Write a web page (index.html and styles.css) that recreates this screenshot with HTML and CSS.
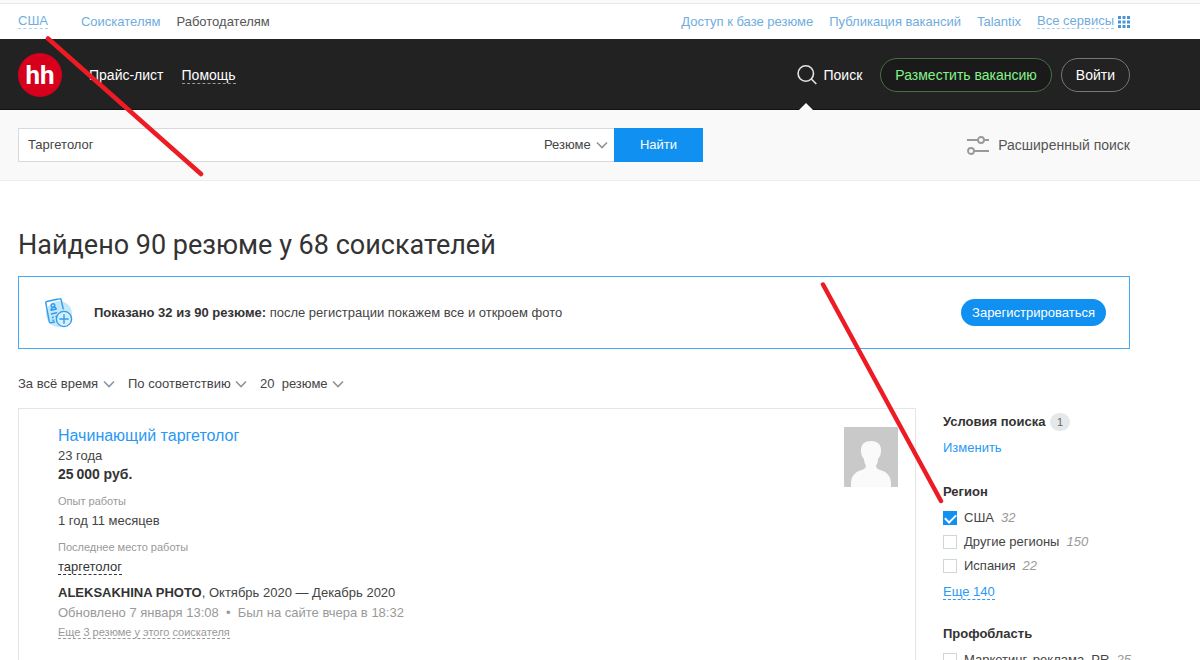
FILE: index.html
```html
<!DOCTYPE html>
<html lang="ru">
<head>
<meta charset="utf-8">
<meta name="viewport" content="width=device-width, initial-scale=1">
<title>Найдено 90 резюме у 68 соискателей</title>
<link rel="stylesheet" href="styles.css">
</head>
<body>
<nav class="topbar wrap">
  <a class="dashed region" href="#">США</a>
  <a href="#">Соискателям</a>
  <a class="current" href="#">Работодателям</a>
  <span class="spacer"></span>
  <a href="#">Доступ к базе резюме</a>
  <a href="#">Публикация вакансий</a>
  <a href="#">Talantix</a>
  <span class="services"><a class="dashed" href="#">Все сервисы</a>
    <svg width="12" height="12" viewBox="0 0 12 12" fill="#4a94d6"><path d="M0 0h3v3H0zM4.500 0h3v3h-3zM9 0h3v3H9zM0 4.500h3v3H0zM4.500 4.500h3v3h-3zM9 4.500h3v3H9zM0 9h3v3H0zM4.500 9h3v3h-3zM9 9h3v3H9z"/></svg>
  </span>
</nav>

<header class="header wrap">
  <a class="logo" href="#">hh</a>
  <a class="price" href="#">Прайс-лист</a>
  <a class="dashed" href="#">Помощь</a>
  <span class="spacer"></span>
  <a class="find" href="#">
    <svg width="20" height="20" viewBox="0 0 20 20" fill="none" stroke="#e4e4e4" stroke-width="1.600"><circle cx="8.800" cy="8.500" r="7.700"/><path d="M14.300 14l5 5"/></svg>
    Поиск
  </a>
  <button class="pill pill-green" type="button">Разместить вакансию</button>
  <button class="pill" type="button">Войти</button>
</header>

<form class="search wrap">
  <div class="field">
    <input class="query" type="text" value="Таргетолог" aria-label="Поиск резюме">
    <span class="pick"><select aria-label="Что искать"><option>Резюме</option></select>
      <svg class="chev" viewBox="0 0 12 8"><path d="M1 1.500l5 5 5-5"/></svg></span>
  </div>
  <button class="submit" type="button">Найти</button>
  <span class="spacer"></span>
  <a class="advanced" href="#">
    <svg width="22" height="20" viewBox="0 0 22 20" fill="none" stroke="#999" stroke-width="1.800"><path d="M0 5h11M17 5h5M7 16h15"/><circle cx="14" cy="5" r="3"/><circle cx="4" cy="16" r="3"/></svg>
    Расширенный поиск
  </a>
</form>

<main class="main wrap">
  <h1>Найдено 90 резюме у 68 соискателей</h1>

  <section class="banner">
    <svg width="30" height="30" viewBox="0 0 30 30" fill="none" stroke="#2f9bf0" stroke-width="1.400" stroke-linecap="round" stroke-linejoin="round">
      <circle cx="14" cy="16" r="13" fill="#c3e8f8" stroke="none"/>
      <path d="M9.500 24l-3.500.8a1.500 1.500 0 0 1-1.700-1.100L.8 5.200a1.400 1.400 0 0 1 1-1.700L14.500.8a1.400 1.400 0 0 1 1.700 1l2 9"/>
      <circle cx="8" cy="7.500" r="1.800"/><path d="M6 12.200c0-3 4.500-4 5.300-1.200zM6.500 16l5-1.200M7.500 19.500l.8-.2M11 18.500l1-.2M8 22.300l.8-.2"/>
      <circle cx="19" cy="21" r="7.600" fill="#d6f0fb"/><path d="M19 16.800v8.400M14.800 21h8.400"/>
    </svg>
    <p class="banner-text"><b>Показано 32 из 90 резюме:</b> после регистрации покажем все и откроем фото</p>
    <button class="register" type="button">Зарегистрироваться</button>
  </section>

  <div class="filters">
    <span class="pick"><select aria-label="Период"><option>За всё время</option></select><svg class="chev" viewBox="0 0 12 8"><path d="M1 1.500l5 5 5-5"/></svg></span>
    <span class="pick"><select aria-label="Сортировка"><option>По соответствию</option></select><svg class="chev" viewBox="0 0 12 8"><path d="M1 1.500l5 5 5-5"/></svg></span>
    <span class="pick"><select aria-label="На странице"><option>20&nbsp; резюме</option></select><svg class="chev" viewBox="0 0 12 8"><path d="M1 1.500l5 5 5-5"/></svg></span>
  </div>

  <div class="columns">
    <article class="card">
      <div class="info">
        <h2><a href="#">Начинающий таргетолог</a></h2>
        <p>23 года</p>
        <p class="salary">25&#8201;000 руб.</p>
        <p class="label">Опыт работы</p>
        <p>1 год 11 месяцев</p>
        <p class="label">Последнее место работы</p>
        <p><a class="dashed job" href="#">таргетолог</a></p>
        <p class="company"><b>ALEKSAKHINA PHOTO</b>, Октябрь 2020 — Декабрь 2020</p>
        <p class="muted">Обновлено 7 января 13:08 &nbsp;•&nbsp; Был на сайте вчера в 18:32</p>
        <p class="more"><a class="dashed" href="#">Еще 3 резюме у этого соискателя</a></p>
      </div>
      <svg class="avatar" width="54" height="60" viewBox="0 0 54 60"><rect width="54" height="60" rx="1" fill="#c9c9c9"/><path fill="#fafafa" d="M7 60V57c0-7 3-11 8-13 4-1 7-3 7-5 0-1-2-3-2-7-3-3-3-7-3-9 0-6 4-9 10-9s10 3 10 9c0 2 0 6-3 9 0 4-2 6-2 7 0 2 3 4 7 5 5 2 8 6 8 13v3z"/></svg>
    </article>

    <aside class="side">
      <h3>Условия поиска <span class="count">1</span></h3>
      <a class="change" href="#">Изменить</a>
      <h3 class="group">Регион</h3>
      <label><input type="checkbox" checked>США <i>32</i></label>
      <label><input type="checkbox">Другие регионы <i>150</i></label>
      <label><input type="checkbox">Испания <i>22</i></label>
      <p class="all"><a class="dashed" href="#">Еще 140</a></p>
      <h3>Профобласть</h3>
      <label><input type="checkbox">Маркетинг, реклама, PR <i>25</i></label>
    </aside>
  </div>
</main>

<svg class="marks" width="1200" height="660" viewBox="0 0 1200 660" fill="none" stroke="#ed1c24" stroke-width="4.500" stroke-linecap="round"><path d="M48 38.500L201 174M823 284.500L941 501"/></svg>
</body>
</html>
```
FILE: styles.css
```css
* { box-sizing: border-box; }
html { height: 100%; overflow: hidden; }
body {
  height: 100%;
  margin: 0;
  position: relative;
  overflow: hidden;
  background: #fff;
  color: #444;
  font: 13px/18px "Liberation Sans", Arial, sans-serif;
}
h1, h2, h3, p { margin: 0; }
a { color: #2a98f5; text-decoration: none; }
b, h3 { color: #333; }
button, input, select { font: inherit; color: inherit; margin: 0; }
button { cursor: pointer; }
svg { flex: none; }
.wrap { padding-left: 18px; padding-right: 70px; }
.spacer { flex: 1; }
.dashed { border-bottom: 1px dashed currentColor; line-height: 14px; }

.topbar {
  display: flex;
  align-items: center;
  gap: 16px;
  height: 39px;
  padding-top: 4px;
  background: linear-gradient(#fafafa 3px, #e8e8e8 3px, #e8e8e8 4px, #fff 4px);
}
.topbar a { color: #6fadde; }
.topbar .region { margin-right: 17px; }
.topbar .current { color: #555; }
.topbar .dashed { border-color: #a9d0ee; }
.topbar .spacer { margin-right: -16px; }
.services { display: flex; align-items: center; gap: 4px; }

.header {
  display: flex;
  align-items: center;
  height: 71px;
  padding-top: 2px;
  background: #222;
  border-bottom: 1px solid #111;
  color: #fff;
  font-size: 14px;
}
.header a { color: #fff; }
.header .dashed { line-height: 16px; border-color: #999; }
.header .logo {
  width: 44px;
  height: 44px;
  border-radius: 50%;
  background: #d6001c;
  font: bold 26px/45px Roboto, sans-serif;
  text-align: center;
}
.price { margin: 0 18px 0 27px; }
.find {
  position: relative;
  display: flex;
  align-items: center;
  gap: 7px;
  height: 100%;
  margin-right: 18px;
}
.find::after {
  content: "";
  position: absolute;
  left: 2px;
  bottom: -1px;
  border: 7px solid transparent;
  border-top: 0;
  border-bottom-color: #fff;
}
.pill {
  height: 34px;
  padding: 0 14px;
  border: 1px solid #777;
  border-radius: 17px;
  background: #222;
  color: #fff;
}
.pill-green {
  margin-right: 9px;
  border-color: #447044;
  background: #1a1a1a;
  color: #85f28b;
}

.search {
  display: flex;
  align-items: center;
  height: 71px;
  background: #f9f9f9;
  border-bottom: 1px solid #ececec;
}
.field {
  display: flex;
  align-items: center;
  width: 54%;
  max-width: 596px;
  height: 34px;
  padding-right: 6px;
  border: 1px solid #d5dadd;
  border-right: 0;
  background: #fff;
}
.query { flex: 1; min-width: 0; padding: 0 9px; border: 0; background: none; outline: 0; }
.pick { display: flex; align-items: center; gap: 5px; }
.pick select { appearance: none; padding: 0; border: 0; background: none; }
.chev { width: 12px; height: 8px; fill: none; stroke: #8b959c; stroke-width: 1.6; }
.submit {
  width: 89px;
  height: 34px;
  border: 0;
  background: #1090f0;
  color: #fff;
}
.advanced { display: flex; align-items: center; gap: 9px; color: #555; font-size: 14px; }

h1 {
  margin: 46px 0 13px;
  color: #333;
  font: 27px/36px Roboto, sans-serif;
}
.banner {
  display: flex;
  align-items: center;
  height: 73px;
  padding: 0 23px 0 26px;
  border: 1px solid #45a9f5;
}
.banner-text { flex: 1; margin-left: 19px; }
.register {
  height: 27px;
  padding: 0 11px;
  border: 0;
  border-radius: 14px;
  background: #1090f0;
  color: #fff;
}
.filters { display: flex; gap: 13px; height: 59px; padding-top: 26px; align-items: flex-start; }
.filters .pick { gap: 4px; }
.columns { display: grid; grid-template-columns: minmax(0, 1fr) 187px; gap: 27px; }
.card {
  display: flex;
  justify-content: space-between;
  padding: 18px 17px 40px 39px;
  border: 1px solid #e5e5e5;
}
h2 { font-weight: normal; font-size: 16px; line-height: 18px; }
.info p { line-height: 19px; }
.info h2 + p { margin-top: 1px; }
.info .salary { color: #333; font-size: 14px; font-weight: bold; }
.info .label { margin-top: 8px; color: #999; font-size: 11px; }
.job { color: #333; }
.info .company { margin-top: 7px; }
.info .muted { color: #999; line-height: 21px; }
.info .more { font-size: 11px; }
.more a { color: #999; }

.side h3 { font-size: 13px; line-height: 18px; margin-top: 5px; }
.count {
  display: inline-block;
  width: 20px;
  margin-left: 1px;
  border-radius: 9px;
  background: #e4e8e9;
  color: #666;
  font-size: 11px;
  font-weight: normal;
  text-align: center;
}
.change { display: block; margin-top: 8px; }
.side .group { margin-top: 26px; }
.side label { display: flex; align-items: center; height: 24px; white-space: nowrap; }
.side h3 + label { margin-top: 5px; }
.side i { margin-left: 7px; color: #999; }
.side input {
  appearance: none;
  flex: none;
  width: 14px;
  height: 14px;
  margin-right: 7px;
  border: 1px solid #d0d7da;
  background: #fff;
}
.side input:checked { border-color: #1090f0; background: #1090f0; }
.side input:checked::after {
  content: "";
  display: block;
  width: 5px;
  height: 9px;
  margin: 0 auto;
  border: solid #fff;
  border-width: 0 2px 2px 0;
  transform: rotate(45deg);
}
.all { margin: 5px 0 24px; }
.marks { position: absolute; left: 0; top: 0; pointer-events: none; }
```
